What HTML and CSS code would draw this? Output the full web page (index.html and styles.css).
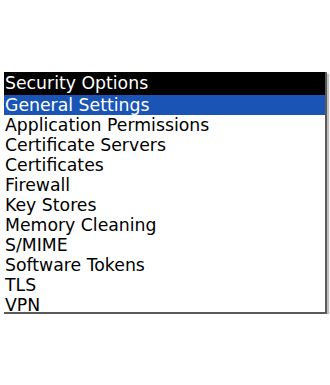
FILE: index.html
```html
<!DOCTYPE html>
<html>
<head>
    <meta charset="utf-8">
    <link rel="stylesheet" href="styles.css">
</head>
<body>
    <div class="screen">
        <div class="title">Security Options</div>
        <div class="list">
            <div class="item selected">General Settings</div>
            <div class="item">Application Permissions</div>
            <div class="item">Certificate Servers</div>
            <div class="item">Certificates</div>
            <div class="item">Firewall</div>
            <div class="item">Key Stores</div>
            <div class="item">Memory Cleaning</div>
            <div class="item">S/MIME</div>
            <div class="item">Software Tokens</div>
            <div class="item">TLS</div>
            <div class="item">VPN</div>
        </div>
    </div>
</body>
</html>
```

FILE: styles.css
```css
body {
    margin: 0;
    padding: 72px 0 0 4px;
    background: #fff;
    font-family: "DejaVu Sans", sans-serif;
    font-size: 17.3px;
}

.screen {
    width: 321px;
    height: 240px;
    background: #fff;
    border-right: 2px solid #5a5a5a;
    border-bottom: 2px solid #5a5a5a;
    box-shadow: 2px 2px 1px rgba(0, 0, 0, 0.25);
}

.title {
    height: 20px;
    line-height: 20px;
    padding: 1px 0 2px 1px;
    background: #000;
    color: #fff;
}

.item {
    height: 20px;
    line-height: 21px;
    color: #000;
    padding-left: 1px;
}

.item:last-child {
    height: 17px;
    overflow: visible;
}

.item.selected {
    background: #1a55b5;
    color: #fff;
}
```
